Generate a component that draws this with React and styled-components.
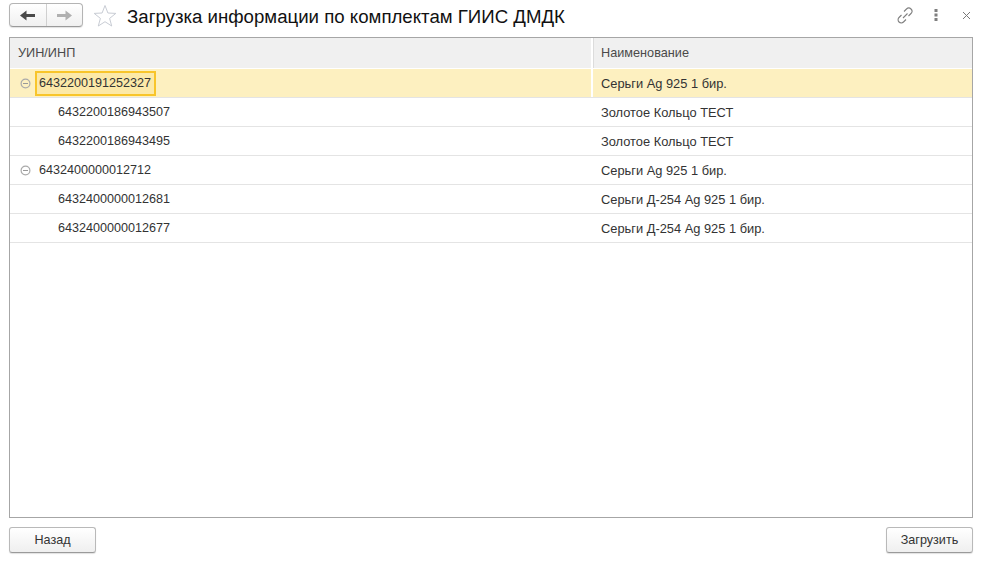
import React from "react";
import styled, { createGlobalStyle } from "styled-components";

const Global = createGlobalStyle`
  html, body { margin: 0; padding: 0; background: #fff; }
  body { font-family: "Liberation Sans", Arial, sans-serif; font-size: 12.6px; color: #333; }
`;

const Page = styled.div`
  width: 983px;
  height: 563px;
  display: flex;
  flex-direction: column;
  overflow: hidden;
`;

const TopBar = styled.div`
  height: 37px;
  display: flex;
  align-items: flex-start;
  padding: 3px 8px 0 9px;
  box-sizing: border-box;
`;

const NavGroup = styled.div`
  width: 74px;
  height: 24px;
  display: flex;
  box-sizing: border-box;
  border: 1px solid #b4b4b4;
  border-bottom-color: #9a9a9a;
  border-radius: 4px;
  background: linear-gradient(#ffffff, #f0f0f0);
  box-shadow: 0 1px 1px rgba(0, 0, 0, 0.12);
`;

const NavButton = styled.div`
  flex: 1;
  display: flex;
  align-items: center;
  justify-content: center;
  & + & { border-left: 1px solid #d0d0d0; }
`;

const StarWrap = styled.div`
  margin: 1px 0 0 10px;
  width: 24px;
  height: 24px;
`;

const Title = styled.div`
  margin: 2px 0 0 10px;
  font-size: 18.65px;
  line-height: 24px;
  color: #111;
  white-space: nowrap;
`;

const Actions = styled.div`
  margin-left: auto;
  display: flex;
  align-items: center;
  height: 24px;
`;

const ActionIcon = styled.div`
  width: ${(p) => p.$w}px;
  display: flex;
  justify-content: center;
`;

const Table = styled.div`
  margin: 0 10px 0 9px;
  flex: 1;
  min-height: 0;
  box-sizing: border-box;
  border: 1px solid #a6a6a6;
  background: #fff;
`;

const GridRow = styled.div`
  display: grid;
  grid-template-columns: 581px 1fr;
  height: 29px;
  box-sizing: border-box;
  border-bottom: 1px solid #e4e4e4;
  background: ${(p) => (p.$active ? "#fdf0c0" : "#fff")};
`;

const HeadRow = styled(GridRow)`
  height: 31px;
  background: #f0f0f0;
  border-bottom: 1px solid #fff;
`;

const HeadCell = styled.div`
  display: flex;
  align-items: center;
  padding-left: 8px;
  font-size: 12.7px;
  color: #4a4a4a;
  & + & { border-left: 2px solid #fff; padding-left: 8px; box-shadow: inset 1px 0 0 #dcdcdc; }
`;

const TreeCell = styled.div`
  display: flex;
  align-items: center;
  padding-left: ${(p) => (p.$child ? 44 : 10)}px;
`;

const Toggle = styled.svg`
  width: 11px;
  height: 11px;
  margin-right: 4px;
  flex: none;
`;

const Code = styled.span`
  box-sizing: border-box;
  height: 25px;
  display: flex;
  align-items: center;
  padding: ${(p) => (p.$focus ? "0 3px 0 2px" : "0")};
  margin-left: ${(p) => (p.$focus ? 0 : 4)}px;
  border: ${(p) => (p.$focus ? "2px solid #f8c52b" : "none")};
  background: ${(p) => (p.$focus ? "#fce9a8" : "transparent")};
`;

const NameCell = styled.div`
  display: flex;
  align-items: center;
  padding-left: 10px;
  font-size: 12.85px;
  ${(p) => p.$active && "border-left: 2px solid #fff; padding-left: 8px;"}
`;

const Footer = styled.div`
  height: 45px;
  display: flex;
  justify-content: space-between;
  align-items: flex-start;
  padding: 9px 10px 0 9px;
  box-sizing: border-box;
`;

const Button = styled.div`
  width: ${(p) => p.$w}px;
  height: 26px;
  box-sizing: border-box;
  display: flex;
  align-items: center;
  justify-content: center;
  border: 1px solid #b9b9b9;
  border-bottom-color: #9a9a9a;
  border-radius: 3px;
  background: linear-gradient(#ffffff, #efefef);
  box-shadow: 0 1px 1px rgba(0, 0, 0, 0.12);
  color: #333;
`;

const rows = [
  { code: "6432200191252327", name: "Серьги Ag 925 1 бир.", active: true },
  { code: "6432200186943507", name: "Золотое Кольцо ТЕСТ", child: true },
  { code: "6432200186943495", name: "Золотое Кольцо ТЕСТ", child: true },
  { code: "6432400000012712", name: "Серьги Ag 925 1 бир." },
  { code: "6432400000012681", name: "Серьги Д-254 Ag 925 1 бир.", child: true },
  { code: "6432400000012677", name: "Серьги Д-254 Ag 925 1 бир.", child: true },
];

const ArrowIcon = styled.svg`
  width: 15px;
  height: 11px;
  transform: ${(p) => (p.$flip ? "scaleX(-1)" : "none")};
`;

const Arrow = ({ color, flip }) => (
  <ArrowIcon viewBox="0 0 15 11" $flip={flip}>
    <path d="M0 5.5 L6.5 0.5 V4 H15 V7 H6.5 V10.5 Z" fill={color} />
  </ArrowIcon>
);

const MinusToggle = () => (
  <Toggle viewBox="0 0 11 11">
    <circle cx="5.5" cy="5.5" r="4.4" fill="none" stroke="#aaa" strokeWidth="1.2" />
    <path d="M3 5.5 H8" stroke="#999" />
  </Toggle>
);

export default function App() {
  return (
    <Page>
      <Global />
      <TopBar>
        <NavGroup>
          <NavButton>
            <Arrow color="#4a4a4a" />
          </NavButton>
          <NavButton>
            <Arrow color="#b0b0b0" flip />
          </NavButton>
        </NavGroup>
        <StarWrap>
          <svg width="24" height="24" viewBox="0 0 24 24">
            <path
              d="M12 1.5 L14.9 9 L22.8 9.4 L16.6 14.4 L18.7 22 L12 17.7 L5.3 22 L7.4 14.4 L1.2 9.4 L9.1 9 Z"
              fill="#fff"
              stroke="#c8ccd4"
            />
          </svg>
        </StarWrap>
        <Title>Загрузка информации по комплектам ГИИС ДМДК</Title>
        <Actions>
          <ActionIcon $w={18}>
            <svg width="16" height="17" viewBox="0 0 16 17" fill="none" stroke="#808080" strokeWidth="1.1">
              <path d="M6 11 L10.5 6.5" />
              <path d="M7 4.5 L9.5 2 a3 3 0 0 1 4.5 4.5 L11.5 9" />
              <path d="M9 12.5 L6.5 15 a3 3 0 0 1 -4.5 -4.5 L4.5 8" />
            </svg>
          </ActionIcon>
          <ActionIcon $w={43}>
            <svg width="4" height="12" viewBox="0 0 4 12" fill="#7f7f7f">
              <rect x="0.5" y="0" width="3" height="3" />
              <rect x="0.5" y="4.5" width="3" height="3" />
              <rect x="0.5" y="9" width="3" height="3" />
            </svg>
          </ActionIcon>
          <ActionIcon $w={18}>
            <svg width="9" height="9" viewBox="0 0 9 9" stroke="#7a7a7a" strokeWidth="1">
              <path d="M1 1 L8 8 M8 1 L1 8" />
            </svg>
          </ActionIcon>
        </Actions>
      </TopBar>
      <Table>
        <HeadRow>
          <HeadCell>УИН/ИНП</HeadCell>
          <HeadCell>Наименование</HeadCell>
        </HeadRow>
        {rows.map((r) => (
          <GridRow key={r.code} $active={r.active}>
            <TreeCell $child={r.child}>
              {!r.child && <MinusToggle />}
              <Code $focus={r.active}>{r.code}</Code>
            </TreeCell>
            <NameCell $active={r.active}>{r.name}</NameCell>
          </GridRow>
        ))}
      </Table>
      <Footer>
        <Button $w={87}>Назад</Button>
        <Button $w={87}>Загрузить</Button>
      </Footer>
    </Page>
  );
}
